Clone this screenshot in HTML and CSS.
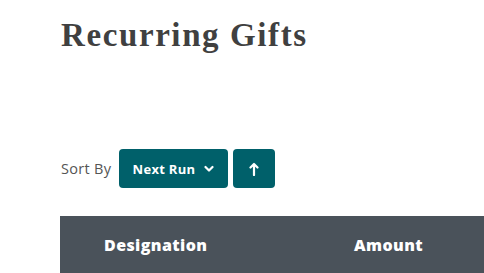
FILE: index.html
```html
<!DOCTYPE html>
<html>
<head>
<meta charset="utf-8">
<link rel="stylesheet" href="styles.css">
</head>
<body>
<div class="page">
  <h1 class="title">Recurring Gifts</h1>
  <div class="sort">
    <span class="sort-label">Sort By</span>
    <button class="btn btn-select">Next Run
      <svg class="chev" width="10" height="8" viewBox="0 0 10 8"><path d="M1.5 2 L5 5.5 L8.5 2" fill="none" stroke="#fff" stroke-width="2.2" stroke-linecap="round" stroke-linejoin="round"/></svg>
    </button>
    <button class="btn btn-dir">
      <svg width="10" height="14" viewBox="0 0 10 14"><path d="M5 13 V2 M1.5 5.5 L5 2 L8.5 5.5" fill="none" stroke="#fff" stroke-width="2.2" stroke-linecap="round" stroke-linejoin="round"/></svg>
    </button>
  </div>
  <div class="thead">
    <div class="th th-des">Designation</div>
    <div class="th th-amt">Amount</div>
  </div>
</div>
</body>
</html>
```
FILE: styles.css
```css
html, body { margin: 0; padding: 0; background: #fff; }
body { overflow: hidden; width: 484px; height: 273px; }
.page { padding: 14px 0 0 60px; }
.title {
  margin: 0 0 0 1px;
  font-family: "Liberation Serif", serif;
  font-weight: bold;
  font-size: 33px;
  line-height: 42px;
  letter-spacing: 1.6px;
  color: #404040;
}
.sort {
  display: flex;
  align-items: center;
  margin-top: 93px;
  height: 39px;
}
.sort-label {
  font-family: "Open Sans", sans-serif;
  font-size: 14.5px;
  letter-spacing: 0.3px;
  color: #555;
  margin-left: 1px;
  width: 58px;
}
.btn {
  border: 0;
  border-radius: 4px;
  background: #00606a;
  color: #fff;
  height: 39px;
  font-family: "Open Sans", sans-serif;
  font-weight: 700;
  font-size: 13px;
  letter-spacing: 0.3px;
  display: flex;
  align-items: center;
  justify-content: center;
  padding: 0;
}
.btn-select { width: 109px; gap: 9px; }
.btn-dir { width: 42px; margin-left: 5px; }
.thead {
  margin-top: 28px;
  background: #4a525a;
  height: 57px;
  display: flex;
  align-items: center;
}
.th {
  font-family: "Open Sans", sans-serif;
  font-weight: 800;
  font-size: 16px;
  letter-spacing: 0.4px;
  color: #fff;
}
.th-des { margin-left: 44px; width: 250px; }
```
